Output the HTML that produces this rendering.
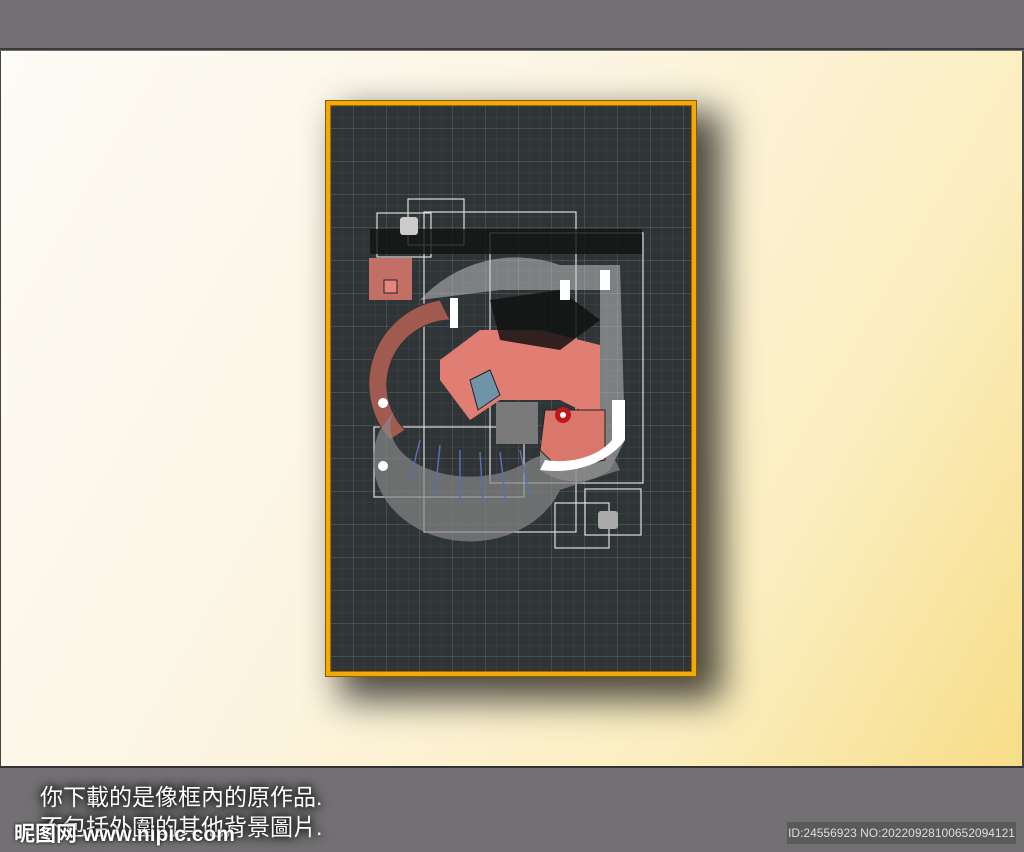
<!DOCTYPE html>
<html><head><meta charset="utf-8"><style>
*{margin:0;padding:0;box-sizing:border-box}
body{width:1024px;height:852px;overflow:hidden;background:#727072;position:relative;font-family:"Liberation Sans","Noto Sans CJK TC",sans-serif}
#top{position:absolute;left:0;top:0;width:1024px;height:50px;background:#727072;border-bottom:2px solid #3a3a3a}
#wall{position:absolute;left:0;top:51px;width:1024px;height:717px;background:linear-gradient(120deg,#fdfbf6 0%,#fcf5e4 40%,#fbeebf 75%,#f7dd88 100%);border-left:1px solid #444;border-right:2px solid #444;border-bottom:2px solid #333}
#shadow{position:absolute;left:340px;top:112px;width:382px;height:588px;background:rgba(0,0,0,.7);filter:blur(18px)}
#frame{position:absolute;left:326px;top:101px;width:370px;height:575px;border:4px solid #f2aa0a;box-shadow:inset 0 0 0 1px #a06a00,0 0 0 1px #8a5a00;background-color:#2f3536;
background-image:linear-gradient(rgba(255,255,255,.08) 1px,transparent 1px),linear-gradient(90deg,rgba(255,255,255,.08) 1px,transparent 1px),linear-gradient(rgba(255,255,255,.035) 1px,transparent 1px),linear-gradient(90deg,rgba(255,255,255,.035) 1px,transparent 1px);
background-size:33px 33px,33px 33px,11px 11px,11px 11px;background-position:-10px -10px}
#bot{position:absolute;left:0;top:770px;width:1024px;height:82px;background:#727072}
.t{position:absolute;left:40px;color:#fff;font-size:23px;line-height:26px;text-shadow:0 0 8px #000,0 0 12px #000}
#id{position:absolute;left:787px;top:822px;width:229px;height:22px;background:#5a5a5a;color:#ddd;font-size:12px;line-height:22px;text-align:center}
#logo{position:absolute;left:14px;top:818px;color:#fff;font-size:21px;font-weight:bold;text-shadow:0 0 3px #000}
</style></head><body>
<div id="top"></div>
<div id="wall"></div>
<div id="shadow"></div>
<div id="frame">
<svg width="362" height="567" viewBox="330 105 362 567" style="position:absolute;left:0;top:0">
<g fill="none" stroke="#ddd" stroke-width="1.2">
<rect x="377" y="213" width="54" height="44"/><rect x="408" y="199" width="56" height="46"/>
<rect x="424" y="212" width="152" height="320"/><rect x="490" y="233" width="153" height="250"/>
<rect x="374" y="427" width="150" height="70"/><rect x="555" y="503" width="54" height="45"/><rect x="585" y="489" width="56" height="46"/>
</g>
<rect x="370" y="229" width="272" height="25" fill="#111" opacity=".8"/>
<rect x="369" y="258" width="43" height="42" fill="#c27066"/>
<rect x="384" y="280" width="13" height="13" fill="#e8857a" stroke="#222"/>
<path d="M420 300 A130 130 0 0 1 560 265 L620 265 L625 440 L610 470 A60 60 0 0 1 540 470 L540 440 L600 440 L600 290 L500 290 Z" fill="#ccc" opacity=".5"/>
<path d="M390 440 A85 85 0 0 1 440 300 L450 320 A65 65 0 0 0 405 430 Z" fill="#a05a50" stroke="#333"/>
<path d="M380 430 A95 80 0 0 0 560 490 L620 470 L600 430 L530 460 A80 50 0 0 1 395 410Z" fill="#888" opacity=".7"/>
<path d="M440 360 L480 330 L540 330 L600 345 L600 420 L560 400 L500 400 L470 420 L440 380Z" fill="#e07e74"/>
<path d="M470 380 L490 370 L500 395 L478 410Z" fill="#6f93a8" stroke="#222"/>
<path d="M490 300 L560 290 L600 320 L560 350 L500 340Z" fill="#111" opacity=".85"/>
<path d="M545 410 L605 410 L605 460 L560 470 L540 450Z" fill="#d9776c" stroke="#222"/>
<path d="M540 470 A80 60 0 0 0 625 440 L625 400 L612 400 L612 440 A60 40 0 0 1 545 460Z" fill="#fff"/>
<circle cx="563" cy="415" r="8" fill="#c01818"/><circle cx="563" cy="415" r="3" fill="#fff"/>
<rect x="496" y="402" width="42" height="42" fill="#7a7a7a"/>
<g stroke="#5a6fb0" stroke-width="1.5"><path d="M420 440 l-10 40M440 445 l-5 50M460 450 l0 55M480 452 l3 50M500 452 l6 50M520 450 l10 48"/></g>
<g fill="#fff"><rect x="450" y="298" width="8" height="30"/><circle cx="383" cy="466" r="5"/><circle cx="383" cy="403" r="5"/><rect x="600" y="270" width="10" height="20"/><rect x="560" y="280" width="10" height="20"/></g>
<rect x="598" y="511" width="20" height="18" rx="3" fill="#aaa"/><rect x="400" y="217" width="18" height="18" rx="3" fill="#ccc"/>
</svg>
</div>
<div id="bot"></div>
<div class="t" style="top:784px">你下載的是像框內的原作品.</div>
<div class="t" style="top:814px">不包括外圍的其他背景圖片.</div>
<div id="logo">昵图网 www.nipic.com</div>
<div id="id">ID:24556923 NO:20220928100652094121</div>
</body></html>
